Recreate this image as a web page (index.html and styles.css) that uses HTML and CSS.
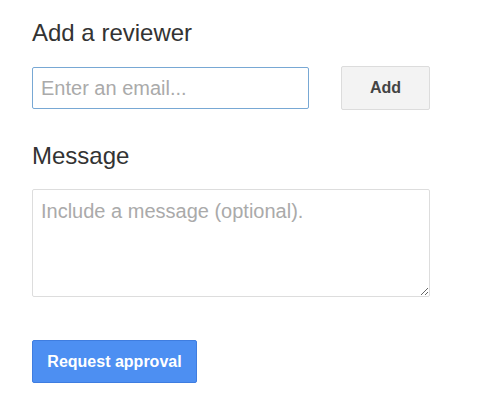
FILE: index.html
```html
<!DOCTYPE html>
<html lang="en">
<head>
    <title>Request approval</title>
    <link rel="stylesheet" href="styles.css">
</head>
<body>
    <div class="panel">
        <h2 class="title">Add a reviewer</h2>
        <div class="reviewer-row">
            <input type="text" class="email" placeholder="Enter an email...">
            <button class="add-btn">Add</button>
        </div>
        <h2 class="title title-message">Message</h2>
        <textarea class="message" placeholder="Include a message (optional)."></textarea>
        <button class="submit-btn">Request approval</button>
    </div>
</body>
</html>
```

FILE: styles.css
```css
body {
    margin: 0;
    font-family: "Liberation Sans", Arial, sans-serif;
    background-color: #ffffff;
}
.panel {
    padding: 19px 0 0 32px;
    width: 398px;
    display: flex;
    flex-direction: column;
}
.title {
    margin: 0;
    font-size: 24px;
    line-height: 28px;
    font-weight: normal;
    color: #333333;
}
.title-message {
    margin-top: 32px;
}
.reviewer-row {
    display: flex;
    align-items: center;
    gap: 32px;
    margin-top: 19px;
}
.email {
    width: 277px;
    height: 42px;
    box-sizing: border-box;
    border: 1px solid #78a8d4;
    border-radius: 2px;
    padding: 0 8px;
    font-family: inherit;
    font-size: 20px;
    color: #333333;
    outline: none;
}
.email::placeholder,
.message::placeholder {
    color: #aaaaaa;
}
.add-btn {
    width: 89px;
    height: 44px;
    box-sizing: border-box;
    border: 1px solid #dcdcdc;
    border-radius: 2px;
    background-color: #f3f3f3;
    font-family: inherit;
    font-size: 16px;
    font-weight: bold;
    color: #444444;
    cursor: pointer;
}
.message {
    margin-top: 19px;
    width: 398px;
    height: 108px;
    box-sizing: border-box;
    border: 1px solid #dddddd;
    border-radius: 2px;
    padding: 9px 8px;
    font-family: inherit;
    font-size: 20px;
    line-height: 24px;
    color: #333333;
    outline: none;
}
.submit-btn {
    align-self: flex-start;
    margin-top: 43px;
    width: 165px;
    height: 43px;
    box-sizing: border-box;
    border: 1px solid #3f7de0;
    border-radius: 2px;
    background-color: #4d8ff2;
    font-family: inherit;
    font-size: 16px;
    font-weight: bold;
    color: #ffffff;
    cursor: pointer;
}
```
